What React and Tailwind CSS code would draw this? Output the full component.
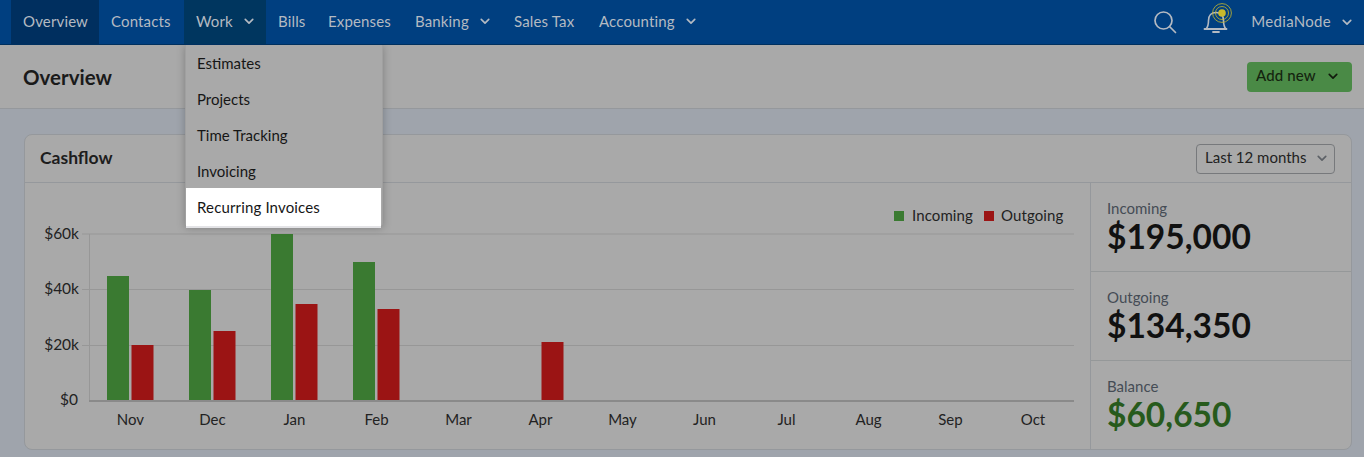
const Chevron = ({ className = "" }) => (
  <svg viewBox="0 0 12 8" className={`w-[10px] h-[7px] ${className}`} fill="none" stroke="currentColor" strokeWidth="2" strokeLinecap="round" strokeLinejoin="round">
    <path d="M1.5 1.5 6 6l4.500-4.500" />
  </svg>
);

const nav = [
  { t: "Overview", w: "w-[88px]", active: true },
  { t: "Contacts", w: "w-[85px]" },
  { t: "Work", w: "w-[82px]", chev: true, open: true },
  { t: "Bills", w: "w-[50px]" },
  { t: "Expenses", w: "w-[87px]" },
  { t: "Banking", w: "w-[99px]", chev: true },
  { t: "Sales Tax", w: "w-[85px]" },
  { t: "Accounting", w: "w-[121px]", chev: true },
];

const menu = ["Estimates", "Projects", "Time Tracking", "Invoicing"];

const bars = [
  { m: "Nov", x: 130.5, g: 276, r: 345 },
  { m: "Dec", x: 212.5, g: 290, r: 331 },
  { m: "Jan", x: 294.5, g: 234, r: 304 },
  { m: "Feb", x: 376.5, g: 262, r: 309 },
  { m: "Mar", x: 458.5 },
  { m: "Apr", x: 540.5, r: 342 },
  { m: "May", x: 622.5 },
  { m: "Jun", x: 704.5 },
  { m: "Jul", x: 786.5 },
  { m: "Aug", x: 868.5 },
  { m: "Sep", x: 950.5 },
  { m: "Oct", x: 1033 },
];

function Chart() {
  return (
    <svg width="1065" height="266" viewBox="25 183 1065 266" className="block">
      {[["$60k", 234], ["$40k", 289.5], ["$20k", 345.5]].map(([l, y]) => (
        <g key={l}>
          <line x1="82" x2="1074" y1={y} y2={y} stroke="#979797" />
          <text x="79" y={y + 4.5} textAnchor="end" fontSize="15.5" fill="#222222">{l}</text>
        </g>
      ))}
      <text x="78" y="405" textAnchor="end" fontSize="15.5" fill="#222222">$0</text>
      <line x1="89.5" x2="89.5" y1="234" y2="401" stroke="#979797" />
      {bars.map((b) => (
        <g key={b.m}>
          {b.g && <rect x={b.x - 23.5} y={b.g} width="22" height={401 - b.g} fill="#3a7a31" />}
          {b.r && <rect x={b.x + 1} y={b.r} width="22" height={401 - b.r} fill="#9b1414" />}
          <text x={b.x} y="425" textAnchor="middle" fontSize="15" fill="#222222">{b.m}</text>
        </g>
      ))}
      <line x1="89" x2="1074" y1="401" y2="401" stroke="#8a8a8a" strokeWidth="2" />
      <rect x="894" y="211" width="10" height="10" fill="#3a7a31" />
      <text x="912" y="221" fontSize="15" letterSpacing="0.1" fill="#222222">Incoming</text>
      <rect x="984" y="211" width="10" height="10" fill="#9b1414" />
      <text x="1001" y="221" fontSize="15" letterSpacing="0.1" fill="#222222">Outgoing</text>
    </svg>
  );
}

function Stat({ label, value, green, last }) {
  return (
    <div className={`h-[89px] pl-[16px] pt-[16px] ${last ? "" : "border-b border-[#959899]"}`}>
      <div className="text-[15px] leading-[18px] text-[#454c55]">{label}</div>
      <div className={`text-[33.5px] leading-[39px] font-bold ${green ? "text-[#275a1c]" : "text-[#111111]"}`}>{value}</div>
    </div>
  );
}

export default function App() {
  return (
    <div className="relative w-[1364px] h-[457px] overflow-hidden bg-[#9fa4ac] text-[15px] text-[#1d1d1d]" style={{ fontFamily: '"Lato", "Noto Sans", sans-serif' }}>
      <header className="relative z-10 h-[45px] bg-[#003f80] border-b border-[#00305f] flex items-stretch pl-[11px] pr-3 text-[#b4bac2] tracking-[0.01em]">
        {nav.map((n) => (
          <div key={n.t} className={`${n.w} flex items-center justify-between pl-3 pr-[12px] pb-[2px] ${n.active ? "bg-[#002f5f]" : n.open ? "bg-[#00365f]" : ""}`}>
            <span>{n.t}</span>
            {n.chev && <Chevron />}
          </div>
        ))}
        <div className="ml-auto flex items-center">
          <svg viewBox="0 0 24 24" className="w-[24px] h-[24px] mr-[25px]" fill="none" stroke="currentColor" strokeWidth="1.7" strokeLinecap="round">
            <circle cx="10.5" cy="10.5" r="8.5" />
            <path d="m16.5 16.5 6 6" />
          </svg>
          <svg viewBox="0 0 30 34" className="w-[30px] h-[34px] mr-[19px] -mt-[5px]" fill="none">
            <path d="M4 26c2-2 2.500-4 2.500-8.500 0-5 3-8 7.500-8s7.500 3 7.500 8c0 4.500.5 6.500 2.500 8.500z" stroke="currentColor" strokeWidth="1.6" strokeLinejoin="round" />
            <path d="M2.500 26h22M11 29h6" stroke="currentColor" strokeWidth="1.8" strokeLinecap="round" />
            <circle cx="20" cy="10" r="3.8" fill="#c8b92c" />
            <circle cx="20" cy="10" r="6.500" stroke="#c8b92c" strokeWidth="0.8" />
            <circle cx="20" cy="10" r="9.400" stroke="#c8b92c" strokeWidth="0.8" />
          </svg>
          <span className="pb-[2px] tracking-[0.02em]">MediaNode</span>
          <Chevron className="ml-[11px]" />
        </div>
      </header>

      <div className="h-[64px] bg-[#a9a9a9] border-b border-[#95989c] flex items-center justify-between pl-[23px] pr-3">
        <h1 className="text-[20.5px] font-bold text-[#1a1a1a] pt-[1px]">Overview</h1>
        <button className="w-[105px] h-[30px] rounded-[4px] bg-[#4a8a46] flex items-center gap-[12px] pl-[9px] pb-[2px] text-[#14240f] font-medium tracking-[0.01em]">
          <span>Add new</span>
          <Chevron className="text-[#111a0c] mt-[2px]" />
        </button>
      </div>

      <main className="px-6 pt-[25px]">
        <section className="h-[316px] w-[1328px] rounded-[8px] border border-[#95989c] bg-[#a9a9a9] overflow-hidden">
          <div className="h-[48px] border-b border-[#95989c] flex items-center justify-between pl-[15px] pr-4">
            <h2 className="text-[17.5px] font-bold text-[#1d1d1d] pb-[1px]">Cashflow</h2>
            <div className="w-[139px] h-[30px] rounded-[4px] border border-[#77797c] flex items-center justify-between pl-[8px] pr-[7px] pb-[2px] text-[#222222]">
              <span>Last 12 months</span>
              <Chevron className="text-[#5d6167] mt-[2px]" />
            </div>
          </div>
          <div className="flex">
            <Chart />
            <aside className="flex-1 border-l border-[#95989c]">
              <Stat label="Incoming" value="$195,000" />
              <Stat label="Outgoing" value="$134,350" />
              <Stat label="Balance" value="$60,650" green last />
            </aside>
          </div>
        </section>
      </main>

      <div className="absolute left-[185px] top-[44px] w-[198px] h-[182px] bg-[#a9a9a9] rounded-b-[3px] border-x border-[#a0a0a0] shadow-[0_2px_8px_rgba(0,0,0,0.25)] text-[#161616]">
        {menu.map((m) => (
          <div key={m} className="h-[36px] flex items-end pb-[6px] pl-[11px]">{m}</div>
        ))}
        <div className="h-[38px] bg-white flex items-center pl-[11px] pt-[1px] mr-[1px] tracking-[0.01em] shadow-[0_2px_0_#e3e3e6]">Recurring Invoices</div>
      </div>
    </div>
  );
}
